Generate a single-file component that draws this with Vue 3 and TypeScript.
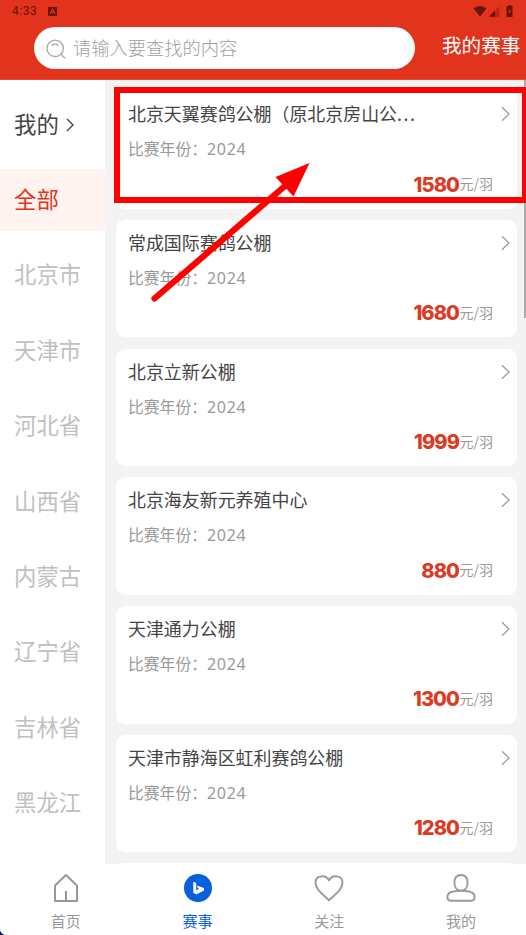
<script setup lang="ts">
interface Race {
  name: string
  truncated?: boolean
  year: number
  price: number
}

const regions: string[] = ['全部', '北京市', '天津市', '河北省', '山西省', '内蒙古', '辽宁省', '吉林省', '黑龙江']
const activeRegion = '全部'

const races: Race[] = [
  { name: '北京天翼赛鸽公棚（原北京房山公', truncated: true, year: 2024, price: 1580 },
  { name: '常成国际赛鸽公棚', year: 2024, price: 1680 },
  { name: '北京立新公棚', year: 2024, price: 1999 },
  { name: '北京海友新元养殖中心', year: 2024, price: 880 },
  { name: '天津通力公棚', year: 2024, price: 1300 },
  { name: '天津市静海区虹利赛鸽公棚', year: 2024, price: 1280 },
]
</script>

<template>
  <div class="screen">
    <header class="header">
      <div class="status">
        <span class="clock">4:33</span>
        <svg class="app-badge" width="9" height="9" viewBox="0 0 9 9">
          <rect width="9" height="9" rx="1" fill="#68130b" />
          <path d="M2 7 4.5 2 7 7M3 5.5H6" fill="none" stroke="#e2331c" stroke-width="1.1" />
        </svg>
        <svg class="signals" width="42" height="13" viewBox="0 0 42 13">
          <path d="M0.5 3.5Q7 -1.5 13.5 3.5L7 11.5Z" fill="#68130b" />
          <path d="M26.5 1V11.7H16Z" fill="#b4261a" />
          <path d="M22 5.6V11.7H16Z" fill="#68130b" />
          <path d="M34.5 1H36V0H38V1H39.5V12H33.5V1Z" fill="#68130b" />
          <path d="M37 3.5 35.3 7H36.5L36 9.5 38 6H36.8Z" fill="#e2331c" />
        </svg>
      </div>
      <div class="tools">
        <div class="search">
          <svg width="20" height="20" viewBox="0 0 20 20" fill="none" stroke="#a5a5a5" stroke-width="1.3" stroke-linecap="round">
            <circle cx="9.2" cy="9.3" r="8.2" />
            <path d="M15 15.2 18.7 18.9M6 6.3Q9 3.9 12 6.2" />
          </svg>
          <span>请输入要查找的内容</span>
        </div>
        <span class="my-races">我的赛事</span>
      </div>
    </header>

    <main class="body">
      <aside class="sidebar">
        <div class="mine">
          <span>我的</span>
          <svg width="8" height="14" viewBox="0 0 8 14"><path d="M1 1 7 7 1 13" fill="none" stroke="#444" stroke-width="1.4" /></svg>
        </div>
        <div v-for="region in regions" :key="region" class="region" :class="{ active: region === activeRegion }">
          {{ region }}
        </div>
      </aside>

      <section class="list">
        <article v-for="race in races" :key="race.name" class="card">
          <div class="title">
            <span>{{ race.name }}<span v-if="race.truncated" class="dots">...</span></span>
            <svg width="9" height="16" viewBox="0 0 9 16"><path d="M1 1.2 8 8 1 14.8" fill="none" stroke="#999" stroke-width="1.2" /></svg>
          </div>
          <div class="year">比赛年份：<span>{{ race.year }}</span></div>
          <div class="price"><b>{{ race.price }}</b><span>元/羽</span></div>
        </article>
        <article class="card"></article>
        <i class="scrollbar"></i>
      </section>
    </main>

    <nav class="tabs">
      <div class="tab">
        <svg width="30" height="30" viewBox="0 0 30 30" fill="none" stroke="#999" stroke-width="2" stroke-linejoin="round">
          <path d="M4 12.5 15 2 26 12.5V28H4Z" /><path d="M15 18V28" />
        </svg>
        <span>首页</span>
      </div>
      <div class="tab current">
        <svg width="30" height="30" viewBox="0 0 30 30">
          <circle cx="15" cy="15" r="14" fill="#0861dc" />
          <path d="M10.3 8.8 13.2 10V17.4L16 15.8 14.8 15.2 13.9 12.4 21 14.9V17.6L13.2 21.4 10.3 19.7Z" fill="#fff" />
        </svg>
        <span>赛事</span>
      </div>
      <div class="tab">
        <svg width="30" height="30" viewBox="0 0 30 30" fill="none" stroke="#999" stroke-width="1.9" stroke-linejoin="round">
          <path d="M15 27.2C8.5 21 1.5 16.5 1.5 9.5C1.5 2.5 11.5.8 15 7.3C18.5.8 28.5 2.5 28.5 9.5C28.5 16.5 21.5 21 15 27.2Z" />
        </svg>
        <span>关注</span>
      </div>
      <div class="tab">
        <svg width="30" height="30" viewBox="0 0 30 30" fill="none" stroke="#999" stroke-width="1.9">
          <path d="M15 2C10.500 2 8.400 5.200 8.400 9.800C8.400 14.300 11 17.600 15 17.600S21.600 14.300 21.600 9.800C21.600 5.200 19.500 2 15 2Z" />
          <path d="M10.500 18C6 18.300 1.400 20 1.400 23.700C1.400 26.800 2.400 27.800 5 27.800H25C27.600 27.800 28.600 26.800 28.600 23.700C28.600 20 24 18.300 19.500 18Q15 17.200 10.500 18Z" />
        </svg>
        <span>我的</span>
      </div>
      <i class="corner"></i>
    </nav>

    <svg class="annotation" width="526" height="935" viewBox="0 0 526 935">
      <rect x="117" y="90" width="408" height="110" fill="none" stroke="#fe0000" stroke-width="6" />
      <path d="M154.500 298.500 289 182.500" stroke="#fe0000" stroke-width="6.200" stroke-linecap="round" />
      <path d="M309.500 163 275.500 177 293.500 196.500Z" fill="#fe0000" />
    </svg>
  </div>
</template>

<style>
body {
  margin: 0;
}
</style>

<style scoped>
.screen {
  position: relative;
  display: flex;
  flex-direction: column;
  width: 526px;
  height: 935px;
  overflow: hidden;
  background: #fff;
  color: #444;
  font-family: "Noto Sans CJK SC", sans-serif;
}
svg {
  display: block;
  flex: none;
}
.header {
  box-sizing: border-box;
  height: 80px;
  flex: none;
  background: #e2331c;
  border-bottom: 1px solid #e9472f;
}
.status {
  display: flex;
  align-items: center;
  box-sizing: border-box;
  height: 22px;
  padding: 0 12px;
}
.clock {
  width: 36px;
  color: #68130b;
  font: 400 12px/22px Roboto, sans-serif;
  letter-spacing: 0.5px;
}
.signals {
  margin-left: auto;
  margin-right: -1px;
}
.tools {
  display: flex;
  align-items: center;
  padding: 5px 0 0 34px;
}
.search {
  display: flex;
  align-items: center;
  gap: 8px;
  box-sizing: border-box;
  width: 381px;
  height: 42px;
  padding-left: 12px;
  padding-top: 1px;
  border-radius: 21px;
  background: #fff;
  color: #a0a0a0;
  font-size: 18.25px;
  line-height: 38px;
  font-weight: 300;
}
.search span {
  margin: -3px 0 0 -1px;
}
.my-races {
  margin: -7px 0 0 27px;
  color: #fff;
  font-size: 19.6px;
  line-height: 30px;
  white-space: nowrap;
}
.body {
  display: flex;
  flex: none;
  height: 784px;
}
.sidebar {
  width: 105px;
  flex: none;
  overflow: hidden;
  background: #fff;
  font-size: 22.4px;
}
.mine {
  display: flex;
  align-items: center;
  gap: 7px;
  height: 89px;
  padding-left: 14px;
}
.mine span {
  margin-top: -3px;
}
.region {
  height: 62px;
  margin-bottom: 13.4px;
  padding-left: 14px;
  color: #c0c0c0;
  line-height: 59px;
}
.region.active {
  background: #fff3f0;
  color: #e2331c;
}
.list {
  position: relative;
  display: flex;
  flex: 1;
  flex-direction: column;
  gap: 11.2px;
  overflow: hidden;
  padding: 11.3px 9px 0 11px;
  background: #f3f3f3;
}
.card {
  box-sizing: border-box;
  height: 117.5px;
  flex: none;
  padding: 9px 7px 0 12px;
  border-radius: 9px;
  background: #fff;
}
.title {
  display: flex;
  align-items: center;
  justify-content: space-between;
  height: 28px;
  font-size: 17.95px;
  line-height: 26.6px;
  white-space: nowrap;
}
.title > span {
  margin-top: -1.4px;
}
.dots {
  letter-spacing: 1.5px;
}
.year {
  height: 24px;
  margin-top: 9px;
  color: #999;
  font-size: 15.8px;
  line-height: 24px;
}
.year span {
  font-family: "Noto Sans", sans-serif;
  font-size: 16px;
  letter-spacing: 0.7px;
}
.price {
  display: flex;
  align-items: center;
  justify-content: flex-end;
  height: 26px;
  margin-top: 9.5px;
  padding-right: 17px;
  color: #999;
  font-size: 14px;
  line-height: 26px;
}
.price span {
  margin-top: -1px;
}
.price b {
  margin-top: 1.4px;
  color: #db3a24;
  font: 800 20px/26px Inter, sans-serif;
  letter-spacing: -0.9px;
  margin-right: 0.5px;
}
.scrollbar {
  position: absolute;
  top: 0;
  right: 0;
  width: 2px;
  height: 238px;
  background: #aaa;
}
.tabs {
  position: relative;
  display: flex;
  flex: 1;
  margin-right: -1px;
  background: #fff;
}
.tab {
  display: flex;
  flex: 1;
  flex-direction: column;
  align-items: center;
  padding-top: 9px;
  color: #999;
  font-size: 15px;
}
.tab span {
  margin-top: 6px;
  line-height: 24px;
}
.tab.current {
  color: #0861dc;
}
.corner {
  position: absolute;
  left: 0;
  bottom: 0;
  width: 6px;
  height: 6px;
  background: radial-gradient(circle at 100% 0, transparent 5.5px, #101467 6.5px);
}
.annotation {
  position: absolute;
  inset: 0;
  pointer-events: none;
}
</style>
